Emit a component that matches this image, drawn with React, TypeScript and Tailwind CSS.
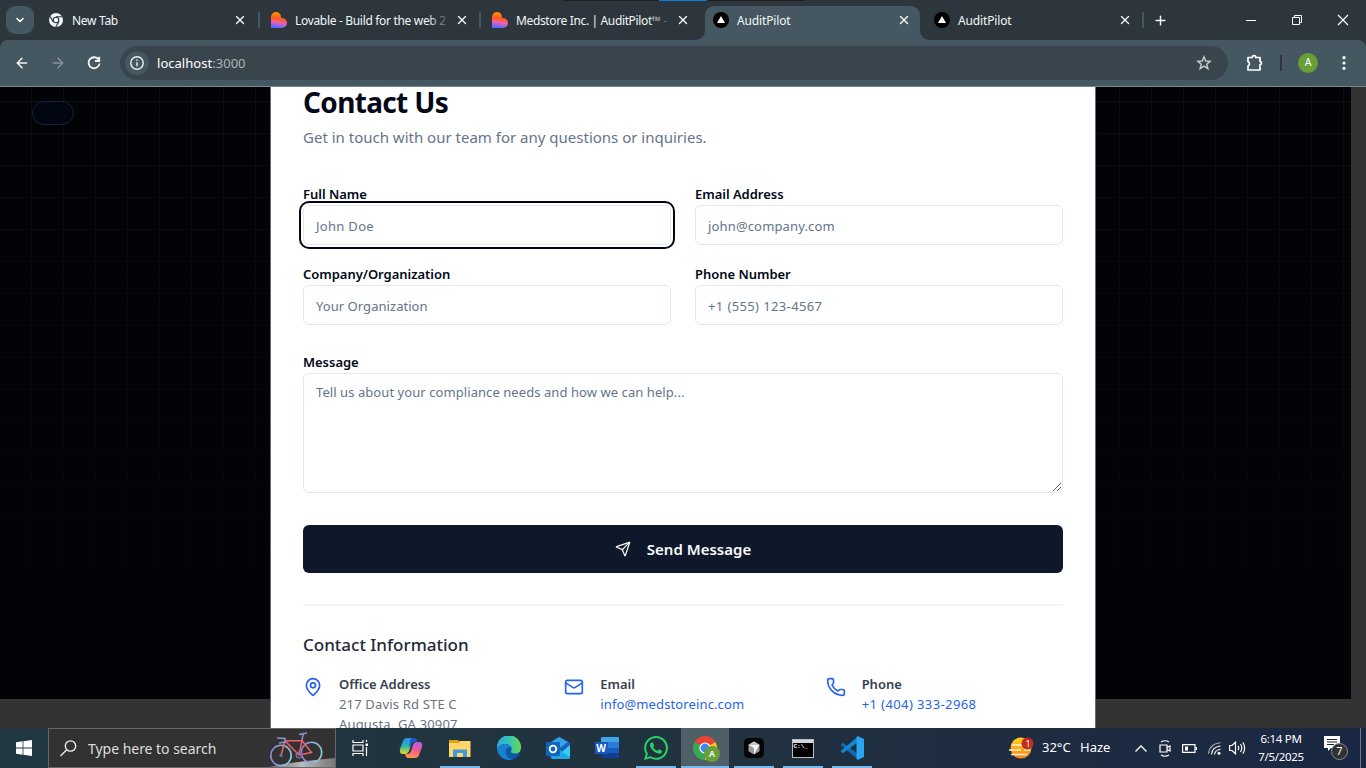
import React, { type ReactNode } from "react";
import { MapPin, Mail, Phone, Send, X, Plus, ChevronDown, ArrowLeft, ArrowRight, Star } from "lucide-react";
import { SiWhatsapp } from "react-icons/si";

function ChromeMono() {
  return (
    <svg width="14" height="14" viewBox="0 0 14 14">
      <circle cx="7" cy="7" r="7" fill="#f4f6f7" />
      <circle cx="7" cy="7" r="3.3" fill="#2c363c" />
      <circle cx="7" cy="7" r="2.2" fill="#f4f6f7" />
      <path d="M7 3.7H13.2M4.1 8.6L1 3.3M9.9 8.6L6.8 14" stroke="#2c363c" strokeWidth="1.1" />
    </svg>
  );
}

function Heart({ id }: { id: string }) {
  return (
    <svg width="16" height="16" viewBox="0 0 16 16">
      <defs>
        <linearGradient id={id} x1="0.55" y1="0" x2="0.4" y2="1">
          <stop offset="0.1" stopColor="#ff8e00" />
          <stop offset="0.42" stopColor="#ff5a20" />
          <stop offset="0.65" stopColor="#f55ea8" />
          <stop offset="0.95" stopColor="#5a6cff" />
        </linearGradient>
      </defs>
      <path d="M0 5A5 5 0 0 1 10 5V6H11A5 5 0 0 1 11 16H0Z" fill={`url(#${id})`} />
    </svg>
  );
}

function Triangle() {
  return (
    <svg width="16" height="16" viewBox="0 0 16 16">
      <circle cx="8" cy="8" r="8" fill="#000" />
      <path d="M8 4L12 11H4Z" fill="#fff" />
    </svg>
  );
}

type TabProps = {
  icon: ReactNode;
  title: string;
  sep?: boolean;
  active?: boolean;
  fade?: boolean;
  pad?: string;
  tracking?: string;
};

function Tab({ icon, title, sep, active, fade, pad = "pl-[11px]", tracking = "tracking-[-0.15px]" }: TabProps) {
  return (
    <div className={`relative flex h-10 w-[221px] shrink-0 items-center ${pad}`}>
      {active && (
        <svg className="absolute left-[-8px] top-[6px]" width="238" height="34" viewBox="0 0 238 34">
          <path d="M0 34Q11 34 11 23V10Q11 0 21 0H216Q226 0 226 10V23Q226 34 237 34Z" fill="#455760" />
        </svg>
      )}
      <div className="relative flex w-4 justify-center">{icon}</div>
      <div className={`relative ml-2 mt-px h-5 flex-1 whitespace-nowrap text-[12px] leading-5 text-[#f4f7f8] ${tracking}`}>
        {title}
        {fade && <div className="absolute right-[4px] top-0 h-5 w-6 bg-gradient-to-r from-transparent to-[#2c363c]" />}
      </div>
      <X className={pad === "pl-[11px]" ? "relative mr-[12px]" : "relative mr-[13px]"} size={14} strokeWidth={2.4} color="#f4f7f8" />
      {sep && <div className="absolute right-0 top-3 h-4 w-[2px] bg-[#455760]" />}
    </div>
  );
}

function TabStrip() {
  return (
    <div className="relative flex h-10 items-center bg-[#2c363c]">
      <div className="absolute left-[563px] top-0 flex h-px w-[241px] bg-[#221d1f]">
        <div className="ml-[96px] h-px w-12 bg-[#0a7bd8]" />
      </div>
      <div className="ml-[6px] mr-[5px] flex h-7 w-7 items-center justify-center rounded-[9px] bg-[#455760]">
        <ChevronDown size={12} strokeWidth={3} color="#fff" />
      </div>
      <Tab icon={<ChromeMono />} title="New Tab" sep pad="pl-[9px]" tracking="tracking-[-0.3px]" />
      <Tab icon={<Heart id="h1" />} title="Lovable - Build for the web 2" sep fade tracking="tracking-[-0.32px]" />
      <Tab icon={<Heart id="h2" />} title="Medstore Inc. | AuditPilot™ -" fade tracking="tracking-[-0.36px]" />
      <Tab icon={<Triangle />} title="AuditPilot" active />
      <Tab icon={<Triangle />} title="AuditPilot" sep />
      <Plus className="ml-[9px]" size={15} strokeWidth={2.3} color="#f4f7f8" />
      <svg className="ml-auto" width="104" height="12" viewBox="0 0 104 12" fill="none" stroke="#fff" strokeWidth="1">
        <path d="M0 6.5H10" />
        <path d="M46.5 3.5H53.5V10.500H46.5ZM48.500 3.500V1.500H55.500V8.500H53.500" />
        <path d="M92 1L102 11M102 1L92 11" strokeWidth="1.2" />
      </svg>
      <div className="w-[16px]" />
    </div>
  );
}

function Toolbar() {
  return (
    <div className="h-[47px] bg-[#2c363c]">
      <div className="flex h-[47px] items-center rounded-t-lg border-b border-[#788790] bg-[#455760]">
        <ArrowLeft className="ml-[14px]" size={16} strokeWidth={2.2} color="#f4f7f8" />
        <ArrowRight className="ml-[20px]" size={16} strokeWidth={2.2} color="#85929a" />
        <svg className="ml-[20px]" width="16" height="16" viewBox="0 0 16 16" fill="none" stroke="#f4f7f8" strokeWidth="1.8">
          <path d="M12.700 4.800A5.500 5.500 0 1 0 13.500 8.500" />
          <path d="M13.200 1.800V6H9" />
        </svg>
        <div className="ml-[18px] flex h-[34px] w-[1108px] items-center rounded-full bg-[#39454c]">
          <div className="ml-[5px] flex h-6 w-6 items-center justify-center rounded-full bg-[#455760]">
            <svg width="14" height="14" viewBox="0 0 14 14" fill="none" stroke="#edf1f3" strokeWidth="1.4">
              <circle cx="7" cy="7" r="6.200" />
              <path d="M7 6.200V10.300M7 3.600V5" />
            </svg>
          </div>
          <div className="ml-2 mt-px text-[13px] tracking-[0.03px] text-white">
            localhost<span className="text-[#a9b3b8]">:3000</span>
          </div>
          <svg className="ml-auto mr-[16px]" width="16" height="16" viewBox="0 0 16 16" fill="none" stroke="#c5cbcf" strokeWidth="1.400">
            <path d="M8 1.800L9.700 6L14.200 6.300L10.700 9.200L11.900 13.700L8 11.200L4.100 13.700L5.300 9.200L1.800 6.300L6.300 6Z" />
          </svg>
        </div>
        <svg className="ml-[18px]" width="18" height="18" viewBox="0 0 18 18">
          <path d="M2 3.500H6.200A1.800 1.800 0 0 1 9.800 3.500H14V7.500A1.500 1.500 0 0 1 14 10.500V16H2V12A2.300 2.300 0 0 0 2 7.700Z" fill="none" stroke="#fff" strokeWidth="1.700" strokeLinejoin="round" />
        </svg>
        <div className="ml-[16px] h-4 w-[2px] bg-[#2c363c]" />
        <div className="ml-[16px] flex h-5 w-5 items-center justify-center rounded-full bg-[#689f38] text-[10.500px] text-white">A</div>
        <svg className="ml-[24px]" width="4" height="14" viewBox="0 0 4 14" fill="#fff">
          <circle cx="2" cy="1.700" r="1.600" />
          <circle cx="2" cy="7" r="1.600" />
          <circle cx="2" cy="12.300" r="1.600" />
        </svg>
      </div>
    </div>
  );
}

function Field({ label, placeholder, focus, tracking = "tracking-[0.05px]" }: { label: string; placeholder: string; focus?: boolean; tracking?: string }) {
  return (
    <div className="h-20">
      <div className="relative -top-px h-5 text-[13px] font-semibold leading-5 tracking-[-0.03px] text-[#020817]">{label}</div>
      <div
        className={
          "flex h-10 items-center rounded-md border border-[#e2e8f0] bg-white px-3 pt-[3px] text-[13px] text-[#64748b] " +
          tracking +
          (focus ? " outline-2 outline-offset-2 outline-[#020817]" : "")
        }
      >
        {placeholder}
      </div>
    </div>
  );
}

function Info({ icon, title, children }: { icon: ReactNode; title: string; children: ReactNode }) {
  return (
    <div className="flex gap-4 text-[13px] leading-5">
      <div className="pt-[3px] text-[#2563eb]">{icon}</div>
      <div>
        <div className="font-semibold tracking-[-0.03px] text-[#374151]">{title}</div>
        {children}
      </div>
    </div>
  );
}

function Page() {
  return (
    <div className="relative flex h-[641px] justify-center overflow-hidden bg-[#333]">
      <div className="absolute left-0 top-0 h-[612px] w-[1351px] bg-[#020307]">
        <div className="h-full w-full bg-[linear-gradient(to_right,#0c0e12_1px,transparent_1px),linear-gradient(to_bottom,#0c0e12_1px,transparent_1px)] bg-[size:32px_32px] bg-[position:31px_14px] [mask-image:linear-gradient(to_bottom,black,transparent_95%)]" />
        <div className="absolute left-8 top-[14px] h-6 w-[42px] rounded-full border border-[#12223a] bg-[#020611]" />
      </div>
      <main className="relative h-full w-[826px] border-x border-[#646b77] bg-white px-8 text-[#020817]">
        <h1 className="text-[28px] font-bold leading-[30px] tracking-[-0.66px]">Contact Us</h1>
        <p className="mt-[8px] text-[15px] leading-6 text-[#64748b]">Get in touch with our team for any questions or inquiries.</p>
        <div className="mt-[36px] grid grid-cols-2 gap-x-6">
          <Field label="Full Name" placeholder="John Doe" focus tracking="tracking-[0.3px]" />
          <Field label="Email Address" placeholder="john@company.com" tracking="tracking-[0.15px]" />
          <Field label="Company/Organization" placeholder="Your Organization" />
          <Field label="Phone Number" placeholder="+1 (555) 123-4567" tracking="tracking-[0.38px]" />
        </div>
        <div className="mt-[7px] text-[13px] font-semibold leading-5 tracking-[-0.03px]">Message</div>
        <div className="relative mt-px h-[120px] rounded-md border border-[#e2e8f0] px-3 py-[8px] text-[13px] leading-5 tracking-[0.07px] text-[#64748b]">
          Tell us about your compliance needs and how we can help...
          <svg className="absolute bottom-0 right-0" width="10" height="10" viewBox="0 0 10 10" stroke="#555" strokeWidth="0.9">
            <path d="M1 9L9 1M5 9L9 5" />
          </svg>
        </div>
        <div className="mt-8 flex h-12 items-center justify-center rounded-md bg-[#0f172a] text-[15px] font-semibold text-[#f8fafc]">
          <Send className="mr-4 mt-[-1px]" size={16} strokeWidth={1.8} />
          Send Message
        </div>
        <div className="mt-[31px] h-[2px] bg-[#f3f4f6]" />
        <h2 className="mt-[25px] text-[17px] font-medium leading-7 text-[#1f2937]">Contact Information</h2>
        <div className="mt-[15px] grid grid-cols-3 gap-6">
          <Info icon={<MapPin size={20} />} title="Office Address">
            <div className="tracking-[0.17px] text-[#6b7280]">217 Davis Rd STE C</div>
            <div className="tracking-[0.17px] text-[#6b7280]">Augusta, GA 30907</div>
          </Info>
          <Info icon={<Mail size={20} />} title="Email">
            <div className="tracking-[0.12px] text-[#2563eb]">info@medstoreinc.com</div>
          </Info>
          <Info icon={<Phone size={20} />} title="Phone">
            <div className="tracking-[0.4px] text-[#2563eb]">+1 (404) 333-2968</div>
          </Info>
        </div>
      </main>
    </div>
  );
}

function Bike() {
  return (
    <svg width="66" height="38" viewBox="0 0 66 38" fill="none">
      <defs>
        <linearGradient id="ground" x1="0" x2="1">
          <stop offset="0" stopColor="#666" />
          <stop offset="0.5" stopColor="#bbb" />
          <stop offset="1" stopColor="#777" />
        </linearGradient>
        <linearGradient id="wheel" x1="0" x2="1">
          <stop offset="0" stopColor="#8f84d8" />
          <stop offset="1" stopColor="#8fd0da" />
        </linearGradient>
      </defs>
      <path d="M0 38Q20 33 66 29V38Z" fill="url(#ground)" />
      <circle cx="12" cy="26.500" r="10.200" stroke="url(#wheel)" strokeWidth="1.600" />
      <circle cx="42.500" cy="23.500" r="10.200" stroke="url(#wheel)" strokeWidth="1.600" />
      <path d="M12 26.500L16 12L30 26L42.500 23.500L33 11.500L30 26M16 12L33 11.500" stroke="#f0606c" strokeWidth="1.500" />
      <path d="M8 9L16 9.500V13L10 14M33 11L34.500 4M30 5.500L38 4" stroke="#8b95cf" strokeWidth="1.500" />
      <circle cx="30" cy="26" r="2.800" stroke="#7774b0" strokeWidth="1.300" />
      <circle cx="12" cy="26.500" r="1.600" fill="#7774b0" />
    </svg>
  );
}

function Slot({ children, open, active }: { children: ReactNode; open?: boolean; active?: boolean }) {
  return (
    <div className={"relative flex h-10 shrink-0 items-center justify-center " + (active ? "ml-px w-12 bg-[#4f5f68]" : "w-[49px]")}>
      {children}
      {open && <div className={"absolute bottom-0 h-[2px] bg-[#76b9ed] " + (active ? "w-full" : "w-10")} />}
    </div>
  );
}

function Copilot() {
  return (
    <svg width="24" height="22" viewBox="0 0 24 22">
      <defs>
        <linearGradient id="c1" x1="0" y1="0" x2="0" y2="1">
          <stop offset="0" stopColor="#2d8df0" />
          <stop offset="0.5" stopColor="#27b6b0" />
          <stop offset="1" stopColor="#f5d818" />
        </linearGradient>
        <linearGradient id="c2" x1="0.5" y1="0" x2="0.3" y2="1">
          <stop offset="0" stopColor="#b65ce8" />
          <stop offset="0.5" stopColor="#f45a88" />
          <stop offset="1" stopColor="#ff9a4a" />
        </linearGradient>
      </defs>
      <path d="M8 1H15Q17 1 18 5H15Q13 5 12 8L10 14Q9 17 6 17H4Q0 17 1 12L4 4Q5 1 8 1Z" fill="url(#c1)" />
      <path d="M12 1H15Q17 1 18 5H15Q13 5 12 8L10 10Z" fill="#1c54c4" />
      <path d="M16 21H9Q7 21 6 17H9Q11 17 12 14L14 8Q15 5 18 5H20Q24 5 23 10L20 18Q19 21 16 21Z" fill="url(#c2)" />
    </svg>
  );
}

function Explorer() {
  return (
    <svg width="22" height="19" viewBox="0 0 22 19">
      <path d="M0 1H9L11 3V5H0Z" fill="#e0a013" />
      <path d="M0 4H10L11 2H21.500V18H0Z" fill="#ffd667" />
      <path d="M4 18V10.500H18V18H14V14H8V18Z" fill="#3c9ae0" />
    </svg>
  );
}

function Edge() {
  return (
    <svg width="24" height="24" viewBox="0 0 24 24">
      <defs>
        <linearGradient id="e1" x1="0" y1="0.500" x2="1" y2="0.500">
          <stop offset="0" stopColor="#2fa8e0" />
          <stop offset="0.500" stopColor="#35c2b8" />
          <stop offset="1" stopColor="#66dc4a" />
        </linearGradient>
      </defs>
      <path d="M12 0A12 12 0 0 0 12 24C16 24 20 22 22 18.500L24 12A12 12 0 0 0 12 0Z" fill="#0c59a4" />
      <path d="M0 11A12 12 0 0 1 24 11.500C24 16 21 17.500 18 17.500C15 17.500 13.500 16.500 14 15C16.500 11 12 8 8.500 8C4 8 0.500 10.500 0 14Z" fill="url(#e1)" />
      <path d="M0.200 14C1 9.500 5 8 8.500 8C11 8 13.500 9.500 14.300 11.500C10 10.500 7.500 14 9 18C10 21 12.500 23 16 23.300A12 12 0 0 1 0.200 14Z" fill="#1780cf" />
    </svg>
  );
}

function Outlook() {
  return (
    <svg width="24" height="22" viewBox="0 0 24 22">
      <path d="M4 6L14 0L24 6V20Q24 22 22 22H6Q4 22 4 20Z" fill="#1565c0" />
      <path d="M5 5L13 0L22 5L12 12Z" fill="#36a3e8" />
      <path d="M24 8V20Q24 22 22 22H8L17 14Z" fill="#38cdf2" />
      <path d="M12 12L24 20Q23 22 22 22H6L5 19Z" fill="#22a7e6" />
      <rect y="5" width="14" height="14" rx="1" fill="#1066bd" />
      <circle cx="7" cy="12" r="3.300" fill="none" stroke="#fff" strokeWidth="1.800" />
    </svg>
  );
}

function Word() {
  return (
    <div className="relative h-[22px] w-6">
      <div className="ml-[6px] flex h-[21px] w-[18px] flex-col overflow-hidden rounded-[1px]">
        <div className="flex-1 bg-[#41a5ee]" />
        <div className="flex-1 bg-[#2b7cd3]" />
        <div className="flex-1 bg-[#185abd]" />
        <div className="flex-1 bg-[#103f91]" />
      </div>
      <div className="absolute left-0 top-[5px] flex h-3 w-[13px] items-center justify-center rounded-[1px] bg-[#185abd] text-[10px] font-bold text-white">W</div>
    </div>
  );
}

function ChromeColor() {
  return (
    <div className="relative h-6 w-6">
      <svg width="24" height="24" viewBox="0 0 24 24">
        <path d="M12 12L1.600 6A12 12 0 0 1 22.400 6Z" fill="#ea4335" />
        <path d="M12 12L22.400 6A12 12 0 0 1 12 24Z" fill="#fbc116" />
        <path d="M12 12V24A12 12 0 0 1 1.600 6Z" fill="#34a853" />
        <path d="M6 6H22.400L12 10Z" fill="#ea4335" />
        <circle cx="12" cy="12" r="5.600" fill="#fff" />
        <circle cx="12" cy="12" r="4.400" fill="#4285f4" />
      </svg>
      <div className="absolute left-[11px] top-[10px] flex h-4 w-4 items-center justify-center rounded-full bg-[#689f38] text-[9px] font-semibold text-white">A</div>
    </div>
  );
}

function Cursor() {
  return (
    <svg width="20" height="20" viewBox="0 0 20 20">
      <rect width="20" height="20" rx="4.500" fill="#050505" />
      <path d="M10 3.500L15.500 6.700V13.300L10 16.500L4.500 13.300V6.700Z" fill="#9b9b9b" />
      <path d="M4.500 6.700H15.500L10 16.500V10Z" fill="#f4f4f4" />
      <path d="M4.500 6.700L10 3.500L15.500 6.700Z" fill="#c8c8c8" />
    </svg>
  );
}

function Cmd() {
  return (
    <div className="h-[19px] w-[22px] border border-[#b9bdc0] bg-black">
      <div className="h-[3px] bg-[#d5d8da]" />
      <div className="pl-px font-['Liberation_Mono',monospace] text-[6px] font-bold leading-[8px] text-white">C:\_</div>
    </div>
  );
}

function Code() {
  return (
    <svg width="24" height="24" viewBox="0 0 24 24">
      <path d="M1 8.200L3 6.700L18 18V23.500L1 9.300Z" fill="#0a6cb8" />
      <path d="M1 15.800L3 17.300L18 6V0.500L1 14.700Z" fill="#1287d2" />
      <path d="M17.500 0L24 3V21L17.500 24L16.500 22.500V1.500Z" fill="#2ba5f2" />
    </svg>
  );
}

function Taskbar() {
  return (
    <div className="flex h-10 items-center bg-gradient-to-r from-[#203842] via-[#21323f] to-[#1a2742] text-white">
      <div className="flex w-12 justify-center">
        <svg width="16" height="16" viewBox="0 0 16 16" fill="#fff">
          <path d="M0 2.300L6.600 1.300V7.600H0ZM7.400 1.200L16 0V7.600H7.400ZM0 8.400H6.600V14.700L0 13.700ZM7.400 8.400H16V16L7.400 14.800Z" />
        </svg>
      </div>
      <div className="flex h-10 w-[288px] items-center border border-[#65696b] bg-[#323232]">
        <svg className="ml-[11px]" width="17" height="17" viewBox="0 0 17 17" fill="none" stroke="#f2f2f2" strokeWidth="1.300">
          <circle cx="10.500" cy="6" r="5.200" />
          <path d="M6.700 9.800L0.500 16" />
        </svg>
        <div className="ml-[11px] w-[150px] whitespace-nowrap text-[14px] tracking-[-0.03px] text-[#dedede]">Type here to search</div>
        <div className="ml-auto"><Bike /></div>
      </div>
      <Slot>
        <svg width="17" height="16" viewBox="0 0 17 16" fill="none" stroke="#fff" strokeWidth="1.200">
          <path d="M1 0V2.500H11V0M1 16V13.500H11V16M1 5H11V11H1ZM14.500 0V2M14.500 7V16" />
          <rect x="13.500" y="3.500" width="2.500" height="2.500" fill="#fff" stroke="none" />
        </svg>
      </Slot>
      <div className="w-[1px]" />
      <Slot><Copilot /></Slot>
      <Slot open><Explorer /></Slot>
      <Slot><Edge /></Slot>
      <Slot><Outlook /></Slot>
      <Slot><Word /></Slot>
      <Slot open><SiWhatsapp size={24} color="#25d366" /></Slot>
      <Slot open active><ChromeColor /></Slot>
      <Slot open><Cursor /></Slot>
      <Slot open><Cmd /></Slot>
      <Slot open><Code /></Slot>
      <svg className="ml-auto" width="25" height="22" viewBox="0 0 25 22">
        <defs>
          <linearGradient id="sun" x1="0" y1="0" x2="0" y2="1">
            <stop offset="0" stopColor="#ffd21c" />
            <stop offset="1" stopColor="#f7841c" />
          </linearGradient>
        </defs>
        <circle cx="12" cy="11" r="10.500" fill="url(#sun)" />
        <path d="M3 8H15M0 13H12M15 13H21M2 17.500H18" stroke="#fff2cf" strokeWidth="1.700" />
        <circle cx="18.500" cy="6.500" r="6" fill="#c42b1c" />
        <text x="16.500" y="10" fontSize="9" fill="#fff">1</text>
      </svg>
      <div className="ml-[8px] w-[30px] whitespace-nowrap text-[13px]">32°C</div>
      <div className="ml-[8px] w-[32px] text-[13px]">Haze</div>
      <svg className="ml-[23px]" width="12" height="7" viewBox="0 0 12 7" fill="none" stroke="#fff" strokeWidth="1.300">
        <path d="M0.500 6.500L6 1L11.500 6.500" />
      </svg>
      <svg className="ml-[12px]" width="12" height="17" viewBox="0 0 12 17" fill="none" stroke="#fff" strokeWidth="1.200">
        <path d="M2 2Q6 -0.500 10 2M2 15Q6 17.500 10 15M1 5H8V12H1ZM8 7.500L11 6V11L8 9.500" />
      </svg>
      <svg className="ml-[11px]" width="15" height="9" viewBox="0 0 15 9" fill="none" stroke="#fff" strokeWidth="1.200">
        <path d="M0.600 0.600H13V8.400H0.600ZM14.400 3V6" />
        <path d="M3 2.500H6V6.500H3Z" fill="#fff" stroke="none" />
      </svg>
      <svg className="ml-[11px]" width="13" height="13" viewBox="0 0 13 13" fill="none" stroke="#fff" strokeWidth="1.100">
        <path d="M0.600 12Q1 2 12.500 0.800" opacity="0.600" />
        <path d="M3.500 12.500Q4 5 12.500 4M6.500 12.500Q7 8 12.500 7.200" />
        <circle cx="11" cy="11.300" r="1.500" fill="#fff" stroke="none" />
      </svg>
      <svg className="ml-[8px]" width="17" height="14" viewBox="0 0 17 14" fill="none" stroke="#fff" strokeWidth="1.200">
        <path d="M0.600 4.500H3L6.500 1.200V12.800L3 9.500H0.600ZM9 4.800Q10.500 7 9 9.200M11.500 3Q14 7 11.500 11M13.800 1.200Q17.500 7 13.800 12.800" />
      </svg>
      <div className="ml-[10px] flex w-[50px] flex-col items-center whitespace-nowrap text-[11.500px] leading-[18px] tracking-[-0.3px]">
        <div>6:14 PM</div>
        <div>7/5/2025</div>
      </div>
      <div className="relative ml-[18px] h-6 w-7">
        <svg className="absolute left-0 top-0" width="16" height="16" viewBox="0 0 16 16">
          <path d="M0 0H16V12H7L4 15V12H0Z" fill="#fff" />
          <path d="M3 3.500H13M3 6H13M3 8.500H10" stroke="#1b2842" />
        </svg>
        <div className="absolute left-[7px] top-[7px] flex h-[17px] w-[17px] items-center justify-center rounded-full border border-[#8a8d92] bg-[#2f3134] text-[11px]">7</div>
      </div>
      <div className="ml-[8px] h-10 w-px bg-[#6d7788]" />
      <div className="w-[5px]" />
    </div>
  );
}

export default function App() {
  return (
    <div className="flex h-[768px] w-[1366px] flex-col overflow-hidden font-['Noto_Sans','Open_Sans',sans-serif]">
      <TabStrip />
      <Toolbar />
      <Page />
      <Taskbar />
    </div>
  );
}
